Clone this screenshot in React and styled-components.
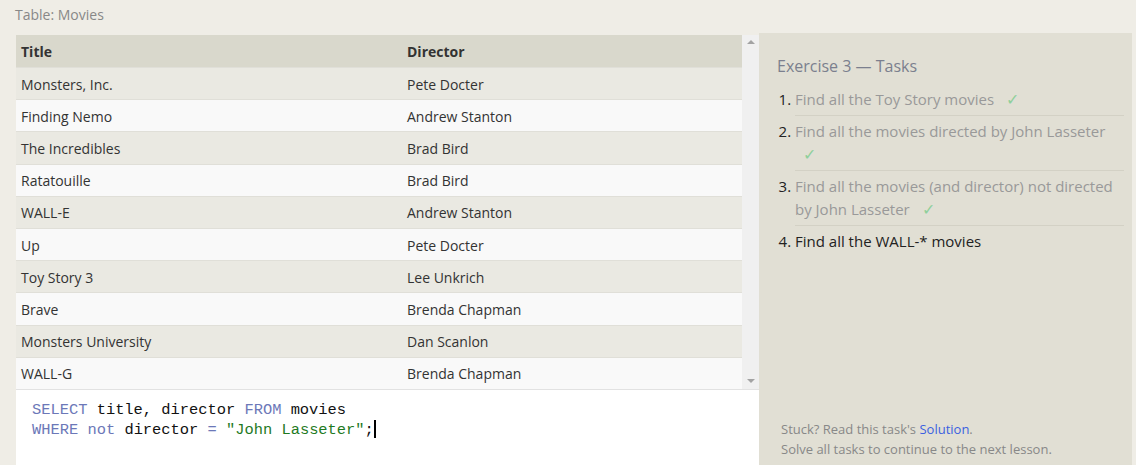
import styled, { createGlobalStyle } from "styled-components";

const GlobalStyle = createGlobalStyle`
  html, body {
    margin: 0;
    padding: 0;
    background: #efede6;
    font-family: "Open Sans", "Noto Sans", sans-serif;
  }
`;

const Page = styled.div`
  width: 1136px;
  height: 465px;
  overflow: hidden;
  display: flex;
  flex-direction: column;
`;

const Caption = styled.div`
  height: 34px;
  padding-left: 15px;
  box-sizing: border-box;
  font-size: 14px;
  line-height: 30px;
  color: #888;
`;

const Main = styled.div`
  flex: 1;
  display: flex;
  padding-left: 16px;
  min-height: 0;
`;

const LeftCol = styled.div`
  width: 743px;
  display: flex;
  flex-direction: column;
  padding-top: 1px;
`;

const TableBox = styled.div`
  display: flex;
  height: 354px;
  overflow: hidden;
  border-bottom: 1px solid #e2e2e2;
`;

const Table = styled.table`
  width: 726px;
  border-collapse: collapse;
  table-layout: fixed;
  font-size: 14px;
  color: #333;
`;

const Th = styled.th`
  text-align: left;
  font-weight: 700;
  height: 31px;
  padding: 1px 5px 0;
  background: #d9d8cc;
  color: #333;
  width: ${(p) => p.w || "auto"};
`;

const Tr = styled.tr`
  background: ${(p) => (p.odd ? "#eae9e2" : "#f9f9f9")};
  border-top: 1px solid #e0dfd8;
`;

const Td = styled.td`
  height: 30px;
  padding: 1px 5px 0;
`;

const Scrollbar = styled.div`
  width: 17px;
  background: #f0f0f0;
  display: flex;
  flex-direction: column;
  justify-content: space-between;
  align-items: center;
  padding: 5px 0 6px;
  box-sizing: border-box;
`;

const Arrow = styled.div`
  width: 0;
  height: 0;
  border-left: 4px solid transparent;
  border-right: 4px solid transparent;
  ${(p) =>
    p.down
      ? "border-top: 4px solid #a3a3a3;"
      : "border-bottom: 4px solid #a3a3a3;"}
`;

const Editor = styled.div`
  flex: 1;
  background: #fff;
  padding: 10px 0 0 16px;
  font-family: "Liberation Mono", "DejaVu Sans Mono", monospace;
  font-size: 15.4px;
  line-height: 20px;
  color: #111;
  white-space: pre;
`;

const Kw = styled.span`
  color: #6c78b8;
`;

const Str = styled.span`
  color: #1f7a1f;
`;

const Cursor = styled.span`
  display: inline-block;
  width: 2px;
  height: 18px;
  background: #000;
  vertical-align: -4px;
`;

const Side = styled.div`
  width: 373px;
  margin-top: -1px;
  background: #e1dfd4;
  padding: 22px 8px 6px 18px;
  box-sizing: border-box;
  display: flex;
  flex-direction: column;
`;

const SideTitle = styled.div`
  font-size: 16px;
  color: #7b7f8e;
  line-height: 22px;
  margin-bottom: 7px;
`;

const TaskList = styled.ol`
  margin: 0;
  padding: 0 0 0 18px;
  font-size: 15px;
  line-height: 23px;
`;

const Task = styled.li`
  color: #222;
  padding: 4px 0 4px;
  border-bottom: ${(p) => (p.last ? "none" : "1px solid #d3d1c5")};
  & > span {
    color: ${(p) => (p.done ? "#999" : "#222")};
  }
`;

const Check = styled.span`
  color: #8fd09b !important;
  margin-left: 8px;
  font-size: 16px;
`;

const Footer = styled.div`
  margin-top: auto;
  padding-left: 4px;
  font-size: 13px;
  line-height: 20px;
  color: #888;
`;

const Link = styled.a`
  color: #3b5fe0;
  text-decoration: none;
`;

const movies = [
  ["Monsters, Inc.", "Pete Docter"],
  ["Finding Nemo", "Andrew Stanton"],
  ["The Incredibles", "Brad Bird"],
  ["Ratatouille", "Brad Bird"],
  ["WALL-E", "Andrew Stanton"],
  ["Up", "Pete Docter"],
  ["Toy Story 3", "Lee Unkrich"],
  ["Brave", "Brenda Chapman"],
  ["Monsters University", "Dan Scanlon"],
  ["WALL-G", "Brenda Chapman"],
];

const tasks = [
  { text: "Find all the Toy Story movies", done: true },
  { text: "Find all the movies directed by John Lasseter", done: true },
  { text: "Find all the movies (and director) not directed by John Lasseter", done: true },
  { text: "Find all the WALL-* movies", done: false },
];

const App = () => {
  return (
    <Page>
      <GlobalStyle />
      <Caption>Table: Movies</Caption>
      <Main>
        <LeftCol>
          <TableBox>
            <Table>
              <thead>
                <tr>
                  <Th w="376px">Title</Th>
                  <Th>Director</Th>
                </tr>
              </thead>
              <tbody>
                {movies.map((m, i) => (
                  <Tr key={m[0]} odd={i % 2 === 0}>
                    <Td>{m[0]}</Td>
                    <Td>{m[1]}</Td>
                  </Tr>
                ))}
              </tbody>
            </Table>
            <Scrollbar>
              <Arrow />
              <Arrow down />
            </Scrollbar>
          </TableBox>
          <Editor>
            <Kw>SELECT</Kw> title, director <Kw>FROM</Kw> movies{"\n"}
            <Kw>WHERE</Kw> <Kw>not</Kw> director <Kw>=</Kw> <Str>"John Lasseter"</Str>;<Cursor />
          </Editor>
        </LeftCol>
        <Side>
          <SideTitle>Exercise 3 — Tasks</SideTitle>
          <TaskList>
            {tasks.map((t, i) => (
              <Task key={i} done={t.done} last={i === tasks.length - 1}>
                <span>{t.text}</span>{" "}
                {t.done && <Check>✓</Check>}
              </Task>
            ))}
          </TaskList>
          <Footer>
            Stuck? Read this task's <Link href="#">Solution</Link>.
            <br />
            Solve all tasks to continue to the next lesson.
          </Footer>
        </Side>
      </Main>
    </Page>
  );
};

export default App;
